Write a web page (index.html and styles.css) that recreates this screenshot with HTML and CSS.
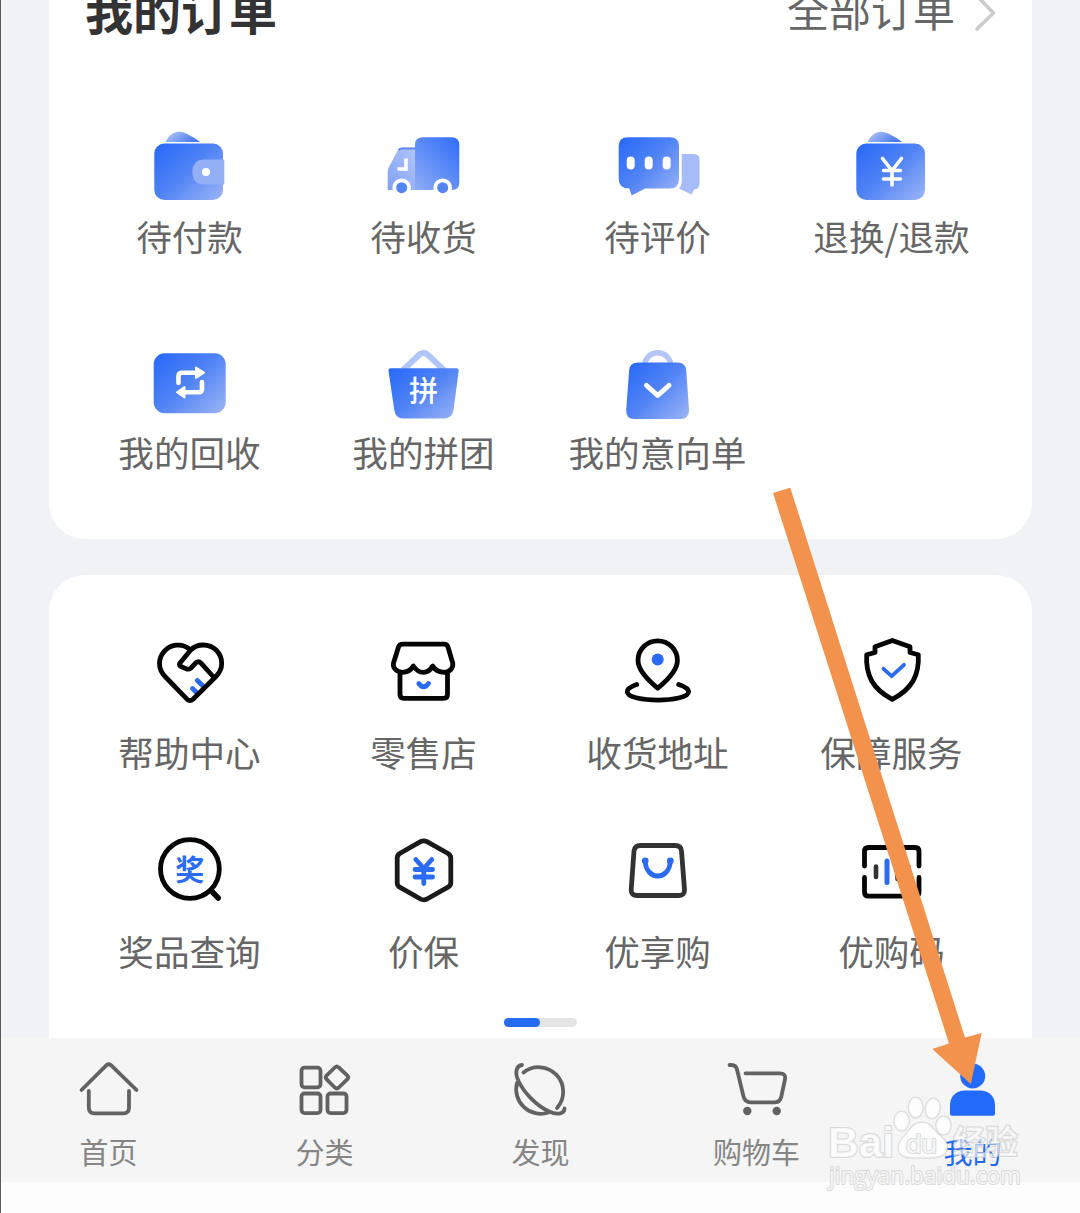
FILE: index.html
```html
<!DOCTYPE html>
<html lang="zh-CN">
<head>
<meta charset="utf-8">
<title>我的</title>
<link rel="stylesheet" href="styles.css">
</head>
<body>
<svg class="defs" width="0" height="0" aria-hidden="true">
  <defs>
    <linearGradient id="blue" x1="0" y1="0.1" x2="1" y2="1">
      <stop offset="0" stop-color="#2b6bf9"/><stop offset="0.45" stop-color="#4f82f5"/><stop offset="1" stop-color="#9db6f6"/>
    </linearGradient>
    <linearGradient id="flap" x1="0" y1="0" x2="1" y2="0.4">
      <stop offset="0" stop-color="#bccdf7"/><stop offset="1" stop-color="#4a79ee"/>
    </linearGradient>
    <linearGradient id="pale" x1="0" y1="1" x2="1" y2="0">
      <stop offset="0" stop-color="#7fa0f5"/><stop offset="1" stop-color="#b3c6f8"/>
    </linearGradient>
    <linearGradient id="box" x1="1" y1="0" x2="0.1" y2="1">
      <stop offset="0" stop-color="#2f6df8"/><stop offset="1" stop-color="#8aa9f6"/>
    </linearGradient>
  </defs>
</svg>
<div class="screen">
  <main class="content">
    <section class="card orders">
      <header class="orders-head">
        <h1>我的订单</h1>
        <a class="all"><span>全部订单</span>
          <svg width="22" height="40" viewBox="0 0 22 40"><path d="M2 3 18.500 20 2 36" fill="none" stroke="#ccc" stroke-width="3.600" stroke-linecap="round" stroke-linejoin="round"/></svg>
        </a>
      </header>
      <div class="grid">
        <div class="item">
          <svg viewBox="0 0 90 80">
            <path d="M20.500 17C24 10 29 6.500 34 6.700 41 7 48 12 55.500 17Z" fill="url(#flap)"/>
            <rect x="9.300" y="18.500" width="68.700" height="56.500" rx="10" fill="url(#blue)"/>
            <path d="M59 34.500H79.300V59.500H59Q47.500 59.500 47.500 47T59 34.500Z" fill="#93b0f7"/>
            <circle cx="61" cy="47" r="4" fill="#fff"/>
          </svg>
          <span>待付款</span>
        </div>
        <div class="item">
          <svg viewBox="0 0 90 80">
            <path d="M36 22.700H23Q20.500 22.700 19 25L10 42Q8.700 44 8.700 47V65H36Z" fill="url(#pale)"/>
            <path d="M19.500 25Q20.800 23.500 23 23.500H36" fill="none" stroke="#5d87ee" stroke-width="1.800"/>
            <path d="M27 33.500V44H18.500" fill="none" stroke="#fff" stroke-width="3.600"/>
            <path d="M44 12.300H72.500Q80.300 12.300 80.300 20V57Q80.300 65 73 65H36V20Q36 12.300 44 12.300Z" fill="url(#box)"/>
            <circle cx="22.700" cy="62.700" r="9.300" fill="#fff"/><circle cx="22.700" cy="62.700" r="5.500" fill="#5584f3"/>
            <circle cx="63.700" cy="62.700" r="9.300" fill="#fff"/><circle cx="63.700" cy="62.700" r="5.500" fill="#5584f3"/>
          </svg>
          <span>待收货</span>
        </div>
        <div class="item">
          <svg viewBox="0 0 90 80">
            <path d="M68.700 29H81Q86.500 29 86.500 35V58Q86.500 64 81 64.500L78.700 69.500 66 63.500Q68.700 61 68.700 57Z" fill="#a5bcf8"/>
            <path d="M15 12.300H57Q66 12.300 66 21V54Q66 63.500 57 63.500H32L18.700 70.500 16.300 63.500Q5.700 63.500 5.700 54V21Q5.700 12.300 15 12.300Z" fill="url(#blue)"/>
            <g fill="#fff"><rect x="13.700" y="31.500" width="8" height="13" rx="4"/><rect x="31.700" y="31.500" width="8" height="13" rx="4"/><rect x="49.700" y="31.500" width="8" height="13" rx="4"/></g>
          </svg>
          <span>待评价</span>
        </div>
        <div class="item">
          <svg viewBox="0 0 90 80">
            <path d="M20.500 17C24 10 29 6.500 34 6.700 41 7 48 12 55.500 17Z" fill="url(#flap)"/>
            <rect x="9.300" y="18.500" width="68.700" height="56.500" rx="10" fill="url(#blue)"/>
            <path d="M35.500 33.500 45 45.500 54.500 33.500M45 45.500V60M36.500 45.500H53.500M36.500 54H53.500" fill="none" stroke="#fff" stroke-width="3.600" stroke-linecap="round"/>
          </svg>
          <span>退换/退款</span>
        </div>
        <div class="item">
          <svg viewBox="0 0 90 80">
            <rect x="8.700" y="12.300" width="72" height="60" rx="11" fill="url(#blue)"/>
            <path d="M33.500 42V35Q33.500 31.700 37 31.700H51M57 41V48Q57 51.300 53.500 51.300H39" fill="none" stroke="#fff" stroke-width="4.600" stroke-linecap="round"/>
            <path d="M51 26.500V36.900L59 31.700ZM39.500 46.100V56.500L32 51.300Z" fill="#fff" stroke="#fff" stroke-width="2" stroke-linejoin="round"/>
          </svg>
          <span>我的回收</span>
        </div>
        <div class="item">
          <svg viewBox="0 0 90 80">
            <path d="M24 29 40.500 13.500Q44.500 10.500 48.500 13.500L65 29" fill="none" stroke="#b2c5f8" stroke-width="6"/>
            <path d="M11.500 27.300H77.500Q80 27.300 79.700 30L74.500 69Q73.300 77.500 65 77.500H24Q16.500 77.500 15.300 69L9.500 30Q9.200 27.300 11.500 27.300Z" fill="url(#blue)"/>
            <text x="44.500" y="61" font-size="29" font-weight="500" fill="#fff" text-anchor="middle">拼</text>
          </svg>
          <span>我的拼团</span>
        </div>
        <div class="item">
          <svg viewBox="0 0 90 80">
            <path d="M31.500 25A13.200 13.200 0 1 1 57.900 25" fill="none" stroke="#b4c6f7" stroke-width="5.400"/>
            <path d="M25 21.500H64.500Q72.500 21.500 73.200 29L76 69Q76.200 78 67.500 78H21.500Q12.800 78 13.200 69L16.200 29Q17 21.500 25 21.500Z" fill="url(#blue)"/>
            <path d="M33.500 44.500 44.700 54.500 56 44.500" fill="none" stroke="#fff" stroke-width="5" stroke-linecap="round" stroke-linejoin="round"/>
          </svg>
          <span>我的意向单</span>
        </div>
      </div>
    </section>

    <section class="card services">
      <div class="grid">
        <div class="item">
          <svg class="line" viewBox="0 0 90 80">
            <path class="accent" d="M52.300 56.500 58.500 62.500M47.500 64.500 52.500 69.500"/>
            <path d="M45.700 26C40 21 35 20.700 31 21.200 21 22.500 14.500 31 14.500 39.500 14.500 45.500 17 49.500 20.500 53L42 75.200Q45 78 48 75.200L70.500 53C75 48.500 76.700 44 76.700 39.500 76.700 29 68.500 21 58.500 21 53 21 48.500 23 45.700 26L34.800 39.200Q33.800 41.500 36 42.500L41.500 44.900Q44 45.800 46 44L51 38.700Q53.500 36.700 55.800 38.900L69 53.500"/>
          </svg>
          <span>帮助中心</span>
        </div>
        <div class="item">
          <svg class="line" viewBox="0 0 90 80">
            <path d="M24 20.200H65Q68 20.200 69 23L73.700 39C74.500 44 71 48 65.500 48.300 60 48.300 56 46 53.700 42 51.500 46 48.500 48.300 44.300 48.300S37 46 34.300 42C32 46 28 48.300 23.500 48.300 17.500 48 13.500 44 14.500 39L19.500 23Q20.500 20.200 24 20.200ZM21 48V70.500Q21 74.300 25 74.300H64.500Q68.500 74.300 68.500 70.500V48"/>
            <path class="accent" d="M39.800 59.500Q44.500 66 49.500 59.500"/>
          </svg>
          <span>零售店</span>
        </div>
        <div class="item">
          <svg class="line" viewBox="0 0 90 80">
            <path d="M44.700 64.200C36 57 25 46 25 36.500A19.700 19.700 0 0 1 64.400 36.500C64.400 46 53.500 57 44.700 64.200ZM23.700 60.500C11 65 11 71 24 74 36 76.700 54 76.700 65.500 74 79 71 79 65 65.700 60.500"/>
            <circle cx="44.700" cy="35.500" r="6" fill="#2a6bf2" stroke="none"/>
          </svg>
          <span>收货地址</span>
        </div>
        <div class="item">
          <svg class="line" viewBox="0 0 90 80">
            <path d="M45.300 16.500 63 22.700V28.500L71.300 30.700C72.500 51 65 65 45.300 75.300 25.500 65 18.500 51 19.700 30.700L28 28.500V22.700Z"/>
            <path class="accent thin" d="M36.500 44.800 44.700 52.200 57 40.800"/>
          </svg>
          <span>保障服务</span>
        </div>
        <div class="item">
          <svg class="line" viewBox="0 0 90 80">
            <circle cx="44.900" cy="46" r="29.400"/><path stroke-width="5.500" d="M67 68.500 73.200 75"/>
            <text x="44.700" y="57.800" font-size="29" font-weight="700" fill="#2a6bf2" stroke="none" text-anchor="middle">奖</text>
          </svg>
          <span>奖品查询</span>
        </div>
        <div class="item">
          <svg class="line soft" viewBox="0 0 90 80">
            <path d="M41.500 18.700Q44.700 17 48 18.700L69 30.500Q71.800 32.300 71.800 35V60Q71.800 62.500 69 64.200L48 76Q44.700 77.700 41.500 76L20.700 64.200Q18.200 62.500 18.200 60V35Q18.200 32.300 20.700 30.500Z"/>
            <path class="accent" d="M36.800 36.500 44.800 45.500 52.800 36.500M44.800 45.500V60.500M36 46.500H53.600M36 54H53.600"/>
          </svg>
          <span>价保</span>
        </div>
        <div class="item">
          <svg class="line gray" viewBox="0 0 90 80">
            <path d="M27.500 22.500H62Q68 22.500 68.500 28L71.500 66.500Q71.700 72.500 66 72.500H24Q18 72.500 18.200 66.500L21 28Q21.700 22.500 27.500 22.500Z"/>
            <path class="accent" d="M32.200 38C33 58 56.500 58 57.300 38"/><g fill="#2a6bf2" stroke="none"><circle cx="32.200" cy="37.800" r="3.400"/><circle cx="57.300" cy="37.800" r="3.400"/></g>
          </svg>
          <span>优享购</span>
        </div>
        <div class="item">
          <svg class="line" viewBox="0 0 90 80">
            <path d="M17.500 43V28.500Q17.500 24.500 21.500 24.500H68Q72 24.500 72 28.500V43M72 54.500V69Q72 73.200 68 73.200H21.500Q17.500 73.200 17.500 69V54.500"/>
            <path stroke="#333" stroke-width="4.600" d="M29 43.500V54M50.500 43V56M61.500 43.500V54"/>
            <path class="accent" stroke-width="5" d="M40 38V59.500"/>
          </svg>
          <span>优购码</span>
        </div>
      </div>
      <div class="pager"><i></i></div>
    </section>
  </main>

  <nav class="tabs">
    <a class="tab"><svg viewBox="0 0 80 60"><path d="M13.500 32 38.500 7.200Q40.700 5.300 43 7.200L68.500 32M20.800 33V49.500Q20.800 55.300 26.500 55.300H55.500Q61 55.300 61 49.500V33"/></svg><span>首页</span></a>
    <a class="tab"><svg viewBox="0 0 80 60"><rect x="17.500" y="9.700" width="19" height="19.600" rx="3"/><rect x="17.500" y="35.500" width="19" height="19.600" rx="3"/><rect x="43.500" y="35.500" width="19" height="19.600" rx="3"/><path d="M50.800 9.500Q52.800 7.500 54.800 9.500L63.200 17.300Q65.200 19.300 63.200 21.300L54.800 29.500Q52.800 31.300 50.800 29.500L42.700 21.300Q40.700 19.300 42.700 17.300Z"/></svg><span>分类</span></a>
    <a class="tab"><svg viewBox="0 0 80 60"><path d="M23.500 14.500A24.500 24.500 0 0 1 57 50M17 25A24.500 24.500 0 0 0 48.500 54.500M22 7C17 7.500 14 13.500 18.500 23 23.500 34 36 47.500 49 53.500 58 57.500 64.500 55.500 64.500 50.500"/></svg><span>发现</span></a>
    <a class="tab"><svg viewBox="0 0 80 60"><path d="M13.500 7H15.500Q20 7.200 21 11.500L27.500 38.500Q29 44.300 34.500 44.300H59Q64 44.300 65.200 39L69 21.500Q70 15.300 64 15.300H29.500"/><circle class="dot" cx="31.300" cy="53" r="4.200"/><circle class="dot" cx="60.700" cy="53" r="4.200"/></svg><span>购物车</span></a>
    <a class="tab active"><svg viewBox="0 0 80 60"><circle cx="40.700" cy="18" r="12.500"/><path d="M32 32.500H49Q63 34 63 48V56Q63 57.700 61 57.700H20Q18 57.700 18 56V48Q18 34 32 32.500Z"/></svg><span>我的</span></a>
  </nav>

  <svg class="overlay" viewBox="0 0 1080 1213" aria-hidden="true">
    <path d="M773 493 790.300 487.700 965 1037.500 981.700 1033 970.800 1084 932.300 1049 949 1043.500Z" fill="#f2924c"/>
    <g class="mark">
      <text class="latin" x="828" y="1157" font-size="43" font-weight="700" textLength="66" lengthAdjust="spacingAndGlyphs">Bai</text>
      <ellipse cx="901.700" cy="1121" rx="7.300" ry="9.500"/><ellipse cx="915.700" cy="1107.500" rx="7" ry="10"/><ellipse cx="932.700" cy="1108.500" rx="7" ry="10" transform="rotate(10 932.700 1108.500)"/><ellipse cx="943.500" cy="1125.500" rx="7.300" ry="9.300"/>
      <path d="M922 1122.500C930 1122.500 933 1129 938 1134 944 1139 948 1143 947 1149 945 1158 935 1158 922 1157.500 909 1158 899 1158 898.500 1148 898.500 1142 903 1138 907 1133 911 1128 914 1122.500 922 1122.500Z"/>
      <text class="latin" x="906" y="1153" font-size="26" textLength="31" lengthAdjust="spacingAndGlyphs">du</text>
      <text class="cn" x="953" y="1154" font-size="33" font-weight="700" textLength="65" lengthAdjust="spacingAndGlyphs">经验</text>
      <text x="829" y="1184" font-size="24" textLength="192" lengthAdjust="spacingAndGlyphs">jingyan.baidu.com</text>
    </g>
  </svg>
</div>
</body>
</html>
```
FILE: styles.css
```css
* { box-sizing: border-box; }

body {
  margin: 0;
  overflow: hidden;
  background: #fdfdfd;
  font-family: "Noto Sans CJK SC", "Noto Sans", sans-serif;
}

.defs { display: block; }

.screen {
  position: relative;
  display: flex;
  flex-direction: column;
  width: 1080px;
  height: 1213px;
  border-left: 1px solid #5c5c5c;
}

.content {
  display: flex;
  flex-direction: column;
  gap: 36px;
  height: 1038px;
  padding: 0 48px;
  background: #f1f2f6;
}

.card { background: #fff; }

.orders {
  height: 539px;
  border-radius: 0 0 36px 36px;
}

.orders-head {
  display: flex;
  justify-content: space-between;
  align-items: flex-start;
  height: 28px;
  padding: 0 35px 0 36px;
  white-space: nowrap;
}

.orders-head h1 {
  margin: 0;
  font-size: 48px;
  line-height: 18px;
  font-weight: 700;
  color: #333;
}

.all {
  display: flex;
  align-items: flex-start;
  gap: 20px;
  font-size: 42px;
  line-height: 17px;
  color: #666;
}

.all svg { margin-top: -7.5px; }

.grid {
  display: grid;
  grid-template-columns: repeat(4, 234px);
  justify-content: center;
}

.orders .grid {
  grid-auto-rows: 216px;
  padding-top: 97px;
}

.item {
  display: flex;
  flex-direction: column;
  align-items: center;
  gap: 9px;
  font-size: 35.6px;
  line-height: 44px;
  color: #666;
  white-space: nowrap;
}

.item svg {
  width: 90px;
  height: 80px;
}

.services {
  flex: 1;
  border-radius: 36px 36px 0 0;
}

.services .grid {
  grid-auto-rows: 199px;
  padding-top: 49px;
}

.services .item { gap: 26px; }

.line {
  fill: none;
  stroke: #050505;
  stroke-width: 4.8;
  stroke-linecap: round;
  stroke-linejoin: round;
}

.line.soft { stroke: #1a1a1a; }
.line.gray { stroke: #333; }
.accent { stroke: #2a6bf2; }
.accent.thin { stroke-width: 3.8; }

.pager {
  width: 73px;
  height: 9px;
  margin: -4px auto 0;
  border-radius: 5px;
  background: #e4e4e4;
}

.pager i {
  display: block;
  width: 36px;
  height: 9px;
  border-radius: 5px;
  background: #256cf2;
}

.tabs {
  display: grid;
  grid-template-columns: repeat(5, 216px);
  width: 1080px;
  height: 144px;
  margin-left: -1px;
  padding-top: 20px;
  border-left: 1px solid #5c5c5c;
  background: #f5f5f5;
}

.tab {
  display: flex;
  flex-direction: column;
  align-items: center;
  gap: 17px;
  margin-left: -1px;
  font-size: 29px;
  line-height: 32px;
  color: #858585;
}

.tab svg {
  width: 80px;
  height: 60px;
  margin-right: 2px;
  fill: none;
  stroke: #626262;
  stroke-width: 3.8;
  stroke-linecap: round;
  stroke-linejoin: round;
}

.tab .dot { fill: #626262; stroke: none; }
.tab.active { color: #2468ea; }
.tab.active svg { fill: #236cfb; stroke: none; }

.overlay {
  position: absolute;
  top: 0;
  left: -1px;
  width: 1080px;
  height: 1213px;
  pointer-events: none;
}

.mark {
  fill: rgba(255, 255, 255, 0.75);
  stroke: rgba(200, 200, 200, 0.65);
  stroke-width: 2;
  paint-order: stroke;
  stroke-linejoin: round;
  font-family: "Open Sans", "Noto Sans", sans-serif;
}

.mark .latin { font-family: "Liberation Sans", sans-serif; }
.mark .cn {
  font-family: "Noto Sans CJK SC", sans-serif;
  fill: rgba(255, 255, 255, 0.6);
}
```
